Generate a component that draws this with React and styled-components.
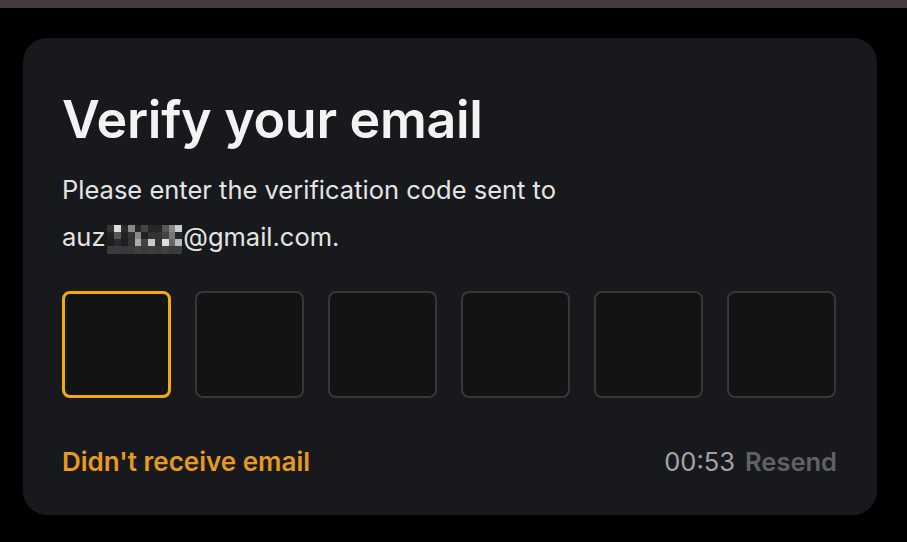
import React from 'react';
import styled, { createGlobalStyle } from 'styled-components';

const Global = createGlobalStyle`
  html, body {
    margin: 0;
    padding: 0;
    background: #000;
    font-family: Inter, "Noto Sans", sans-serif;
  }
`;

const Page = styled.div`
  width: 907px;
  height: 542px;
  background: #000;
  display: flex;
  flex-direction: column;
  overflow: hidden;
`;

const TopBar = styled.div`
  height: 8px;
  background: #433b3c;
  flex-shrink: 0;
`;

const Stage = styled.div`
  padding: 30px 0 0 23px;
`;

const Card = styled.div`
  width: 854px;
  height: 477px;
  box-sizing: border-box;
  background: #18191d;
  border-radius: 24px;
  padding: 50px 39px 0 39px;
  display: flex;
  flex-direction: column;
`;

const Title = styled.h1`
  margin: 0;
  color: #f3f3f3;
  font-size: 52px;
  font-weight: 600;
  line-height: 64px;
  letter-spacing: -0.3px;
`;

const Text = styled.p`
  margin: ${p => (p.$first ? '14px' : '0')} 0 0;
  color: #e4e4e4;
  font-size: 25.5px;
  line-height: 47px;
  white-space: nowrap;
`;

const Mask = styled.span`
  display: inline-grid;
  grid-template-columns: repeat(11, 6.8px);
  grid-template-rows: repeat(4, 7.25px);
  vertical-align: middle;
  margin: 0 1px 0 2px;
`;

const Cell = styled.span`
  background: ${p => p.$c};
`;

const Codes = styled.div`
  display: flex;
  gap: 24px;
  margin-top: 31px;
`;

const CodeBox = styled.div`
  width: 109px;
  height: 107px;
  box-sizing: border-box;
  background: #131313;
  border: ${p => (p.$active ? '3px solid #f4a90c' : '2px solid #36373b')};
  border-radius: 8px;
`;

const Footer = styled.div`
  display: flex;
  justify-content: space-between;
  align-items: center;
  height: 32px;
  margin-top: 47px;
  padding-right: 1px;
`;

const Link = styled.span`
  color: #e79a1c;
  font-size: 26px;
  font-weight: 600;
`;

const Timer = styled.div`
  display: flex;
  gap: 10px;
  font-size: 25.5px;
`;

const Count = styled.span`
  color: #a3a3a5;
`;

const Resend = styled.span`
  color: #606165;
  font-weight: 600;
`;

// pixelated blur over the hidden part of the address
const maskPattern = [
  '333', 'ddd', '2c2c30', '888', '26262a', '444', '26262a', '26262a', '555', '888', 'ccc',
  '222', '555', '222', '333', '888', '222', '333', '333', '444', '777', '26262a',
  '1f1f23', '2a2a2e', '1f1f23', '333', 'aaa', '444', 'ccc', '333', 'ddd', '666', 'bbb',
  '3a3a3c', '3c3c3e', '38383a', '3a3a3c', '404042', '3a3a3c', '3e3e40', '3a3a3c', '404042', '3a3a3c', '3c3c3e',
];

export default function App() {
  return (
    <Page>
      <Global />
      <TopBar />
      <Stage>
        <Card>
          <Title>Verify your email</Title>
          <Text $first>Please enter the verification code sent to</Text>
          <Text>
            auz
            <Mask>
              {maskPattern.map((c, i) => (
                <Cell key={i} $c={'#' + c} />
              ))}
            </Mask>
            @gmail.com.
          </Text>
          <Codes>
            {[0, 1, 2, 3, 4, 5].map(i => (
              <CodeBox key={i} $active={i === 0} />
            ))}
          </Codes>
          <Footer>
            <Link>Didn't receive email</Link>
            <Timer>
              <Count>00:53</Count>
              <Resend>Resend</Resend>
            </Timer>
          </Footer>
        </Card>
      </Stage>
    </Page>
  );
}
